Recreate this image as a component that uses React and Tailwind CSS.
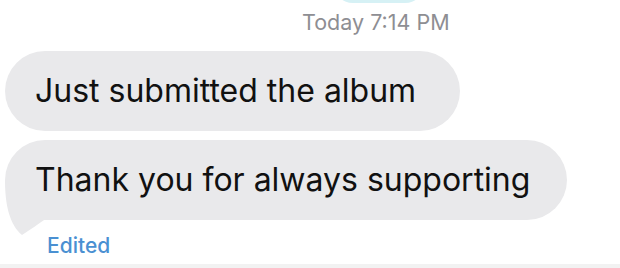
import React from 'react';

const font = { fontFamily: 'Inter, "Liberation Sans", sans-serif' };

const Bubble = ({ width, children, tail }) => (
    <div className={`relative ml-[5px] h-[80px] ${width} rounded-[40px] bg-[#e9e9eb] pl-[30px] flex items-center`}>
        {tail && (
            <svg className="absolute left-0 top-0 overflow-visible" width="50" height="100" viewBox="0 0 50 100">
                <path d="M0 40 C0 66 5 85 17 95 C25 90 33 84 42 78 L42 40 Z" fill="#e9e9eb" />
            </svg>
        )}
        <span className="relative text-[32px] leading-none text-[#111]">{children}</span>
    </div>
);

export default function App() {
    return (
        <div className="w-[620px] h-[268px] bg-white overflow-hidden flex flex-col" style={font}>
            {/* bubble peeking from above */}
            <div className="ml-[333px] -mt-[37px] h-[40px] w-[92px] rounded-full bg-[#d6f1f5]" />

            <div className="mt-[7px] ml-[302px] h-[24px] leading-[24px] text-[21.5px] text-[#8e8e93]">
                Today 7:14 PM
            </div>

            <div className="mt-[17px]">
                <Bubble width="w-[455px]">Just submitted the album</Bubble>
            </div>
            <div className="mt-[9px]">
                <Bubble width="w-[562px]" tail>Thank you for always supporting</Bubble>
            </div>

            <div className="mt-[14px] ml-[47px] h-[24px] leading-[24px] text-[21px] font-medium text-[#4a90d2]">
                Edited
            </div>

            <div className="mt-auto h-[4px] bg-[#f2f2f2]" />
        </div>
    );
}
